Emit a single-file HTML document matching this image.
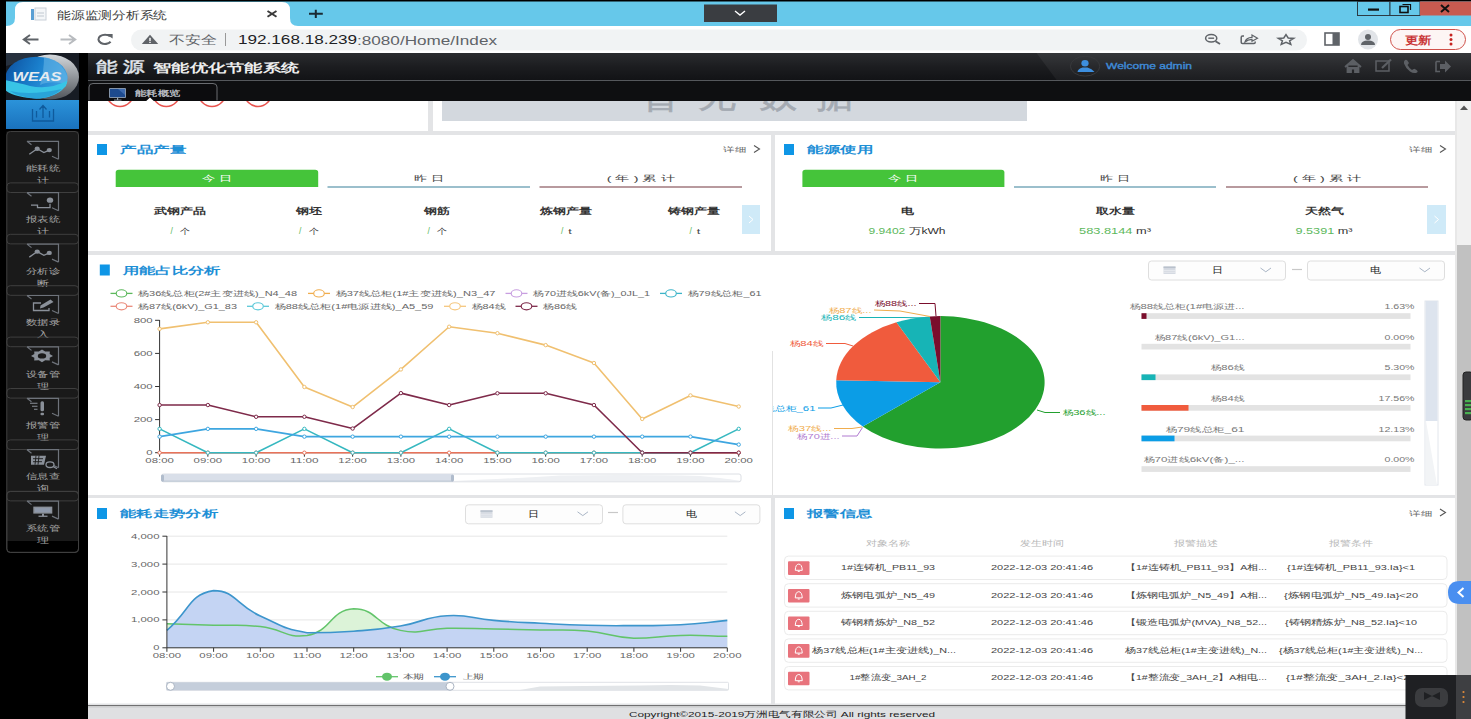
<!DOCTYPE html><html><head><meta charset="utf-8"><style>html,body{margin:0;padding:0;overflow:hidden;background:#000}svg{display:block;font-family:"Liberation Sans",sans-serif}</style></head><body><svg width="1471" height="719" viewBox="0 0 1471 719"><rect x="0" y="0" width="1471" height="719" fill="#000" />
<rect x="6" y="1.5" width="1465" height="25" fill="#66c8ea" />
<path d="M6,26 Q15,26 15,18 L15,10 Q15,2 23,2 L282,2 Q290,2 290,10 L290,18 Q290,26 298,26 Z" fill="#fff" />
<rect x="31" y="9" width="3" height="11" fill="#5a9fd4" />
<rect x="35" y="8" width="11" height="12" fill="#f4f6f8" stroke="#c9d0d8" stroke-width="1" />
<line x1="37" y1="13" x2="44" y2="13" stroke="#c0c8d0" stroke-width="1" />
<line x1="37" y1="16" x2="44" y2="16" stroke="#c0c8d0" stroke-width="1" />
<text x="57" y="14.5" font-size="11.0" fill="#3c3c3c" text-anchor="start" dominant-baseline="central" font-family="Liberation Sans" textLength="110" lengthAdjust="spacingAndGlyphs" >能源监测分析系统</text>
<path d="M267.5,11 L276.5,16.8 M276.5,11 L267.5,16.8" fill="none" stroke="#3a3a3a" stroke-width="1.9" />
<path d="M315.8,9.8 L315.8,18 M309,13.8 L322.8,13.8" fill="none" stroke="#1a2a33" stroke-width="2" />
<rect x="704" y="4.5" width="73" height="17.5" fill="#3a3d41" />
<path d="M735,11 L740,15 L745,11" fill="none" stroke="#fff" stroke-width="1.4" />
<rect x="1357.5" y="1.5" width="32.5" height="14" fill="#66c8ea" stroke="#2b3a44" stroke-width="1" />
<rect x="1390" y="1.5" width="30" height="14" fill="#66c8ea" stroke="#2b3a44" stroke-width="1" />
<rect x="1420" y="1.5" width="51" height="14" fill="#c75a50" />
<rect x="1368" y="8.5" width="11" height="2.2" fill="#111" />
<rect x="1400" y="6.5" width="8" height="6" fill="none" stroke="#111" stroke-width="1.6" />
<path d="M1402.5,4.5 L1410.5,4.5 L1410.5,10" fill="none" stroke="#111" stroke-width="1.2" />
<path d="M1441,5 L1449,12 M1449,5 L1441,12" fill="none" stroke="#111" stroke-width="2" />
<rect x="6" y="26" width="1465" height="27" fill="#fff" />
<path d="M23.8,39.5 L38.5,39.5 M30,35 L23.8,39.5 L30,44" fill="none" stroke="#5f6368" stroke-width="2" />
<path d="M60.5,39.5 L75.2,39.5 M69,35 L75.2,39.5 L69,44" fill="none" stroke="#b8bbbf" stroke-width="2" />
<path d="M110,36.3 A6.6,4.6 0 1 0 110.6,41.8" fill="none" stroke="#5f6368" stroke-width="2.1" />
<path d="M105.5,34 L112.6,34 L112.6,38.6 Z" fill="#5f6368" />
<rect x="131" y="29.5" width="1176" height="21" fill="#f1f3f4" rx="10.5" />
<path d="M150,34.8 L158.2,44 L141.8,44 Z" fill="#5f6368" />
<rect x="149.3" y="37.8" width="1.4" height="3.2" fill="#fff" />
<rect x="149.3" y="41.8" width="1.4" height="1.2" fill="#fff" />
<text x="169" y="39.5" font-size="11.5" fill="#5f6368" text-anchor="start" dominant-baseline="central" font-family="Liberation Sans" textLength="48" lengthAdjust="spacingAndGlyphs" >不安全</text>
<rect x="225" y="33" width="1" height="13" fill="#999" />
<text x="238" y="39.5" font-size="13.5" dominant-baseline="central" textLength="259" lengthAdjust="spacingAndGlyphs" fill="#202124">192.168.18.239<tspan fill="#5f6368">:8080/Home/Index</tspan></text>
<ellipse cx="1211.2" cy="38.2" rx="5.6" ry="3.7" fill="none" stroke="#5f6368" stroke-width="1.5"/>
<path d="M1215.5,41.2 L1220,44" fill="none" stroke="#5f6368" stroke-width="1.8" />
<path d="M1208.3,38.2 L1214.1,38.2" fill="none" stroke="#5f6368" stroke-width="1.4" />
<path d="M1244,36 L1242.5,36 Q1241.2,36 1241.2,37.5 L1241.2,42.3 Q1241.2,43.6 1242.5,43.6 L1254,43.6 Q1255.2,43.6 1255.2,42.3 L1255.2,41.5" fill="none" stroke="#5f6368" stroke-width="1.5" />
<path d="M1245,42 Q1246,37.5 1252,37.3 L1252,35 L1257.5,38.2 L1252,41.3 L1252,39.3 Q1248,39.2 1245,42 Z" fill="none" stroke="#5f6368" stroke-width="1.2" />
<path d="M1286,34.6 L1288.2,38 L1293.6,38.4 L1289.6,40.8 L1290.8,44.4 L1286,42.4 L1281.2,44.4 L1282.4,40.8 L1278.4,38.4 L1283.8,38 Z" fill="none" stroke="#5f6368" stroke-width="1.5" />
<rect x="1325" y="33" width="14" height="12" fill="none" stroke="#5f6368" stroke-width="1.6" />
<rect x="1332.5" y="33" width="6.5" height="12" fill="#5f6368" />
<circle cx="1368" cy="39.5" r="10" fill="#e1e4e8"/>
<circle cx="1368" cy="37" r="3" fill="#5f6368"/>
<path d="M1361,45 Q1361,40.5 1368,40.5 Q1375,40.5 1375,45 Z" fill="#5f6368" />
<rect x="1390.5" y="29.5" width="75" height="20" fill="#fdf5f4" rx="10" stroke="#d0514a" stroke-width="1" />
<text x="1418" y="39.5" font-size="10.5" fill="#c5221f" text-anchor="middle" dominant-baseline="central" font-family="Liberation Sans" textLength="27" lengthAdjust="spacingAndGlyphs" stroke="#c5221f" stroke-width="0.3">更新</text>
<circle cx="1451" cy="35.0" r="1.5" fill="#c5221f"/>
<circle cx="1451" cy="39.5" r="1.5" fill="#c5221f"/>
<circle cx="1451" cy="44.0" r="1.5" fill="#c5221f"/>
<defs><linearGradient id="hdr" x1="0" y1="0" x2="0" y2="1"><stop offset="0" stop-color="#2a2c2f"/><stop offset="0.5" stop-color="#1c1d20"/><stop offset="1" stop-color="#121316"/></linearGradient><linearGradient id="hdr2" x1="0" y1="0" x2="0" y2="1"><stop offset="0" stop-color="#36383b"/><stop offset="0.5" stop-color="#28292c"/><stop offset="1" stop-color="#1c1d20"/></linearGradient><linearGradient id="btnblue" x1="0" y1="0" x2="0" y2="1"><stop offset="0" stop-color="#2b93da"/><stop offset="1" stop-color="#1a72bd"/></linearGradient><linearGradient id="tabg" x1="0" y1="0" x2="0" y2="1"><stop offset="0" stop-color="#2c2d30"/><stop offset="1" stop-color="#111214"/></linearGradient><radialGradient id="logo1" cx="0.35" cy="0.35" r="0.8"><stop offset="0" stop-color="#58b4ea"/><stop offset="0.6" stop-color="#1f6fb8"/><stop offset="1" stop-color="#0f3f7a"/></radialGradient><linearGradient id="logoring" x1="0" y1="0" x2="1" y2="1"><stop offset="0" stop-color="#cfd4da"/><stop offset="1" stop-color="#4a4f55"/></linearGradient><linearGradient id="ttl" x1="0" y1="0" x2="0" y2="1"><stop offset="0" stop-color="#f4f6f8"/><stop offset="0.5" stop-color="#c8d0d8"/><stop offset="1" stop-color="#e8ecf0"/></linearGradient></defs>
<rect x="6" y="53" width="1465" height="27" fill="url(#hdr)" />
<path d="M1036.6,53 L1471,53 L1471,80 L1056.6,80 Z" fill="url(#hdr2)" />
<rect x="88" y="80" width="1383" height="1" fill="#55585c" />
<rect x="88" y="81" width="1383" height="20" fill="#0e0f11" />
<text x="96" y="67" font-size="14.5" fill="url(#ttl)" text-anchor="start" dominant-baseline="central" font-family="Liberation Sans" textLength="49" lengthAdjust="spacingAndGlyphs" font-weight="bold" >能 源</text>
<text x="153" y="67.5" font-size="11.5" fill="#eeeeee" text-anchor="start" dominant-baseline="central" font-family="Liberation Sans" textLength="146" lengthAdjust="spacingAndGlyphs" font-weight="bold" >智能优化节能系统</text>
<path d="M89,100.5 L89,87 Q89,83.5 93,83.5 L213,83.5 Q217,83.5 217,87 L217,100.5" fill="#0c0c0e" stroke="#6a6c70" stroke-width="1" />
<rect x="109" y="88" width="17" height="10" fill="#8494aa" rx="1" />
<rect x="110" y="89" width="15" height="8" fill="#1d4a8e" />
<path d="M118,89 L125,89 L125,95 Z" fill="#3d6aae" />
<rect x="117" y="98" width="1.2" height="2" fill="#9aa6b4" />
<rect x="114" y="99.6" width="7.5" height="0.9" fill="#9aa6b4" />
<text x="135" y="93" font-size="8.0" fill="#c4c8ce" text-anchor="start" dominant-baseline="central" font-family="Liberation Sans" textLength="45" lengthAdjust="spacingAndGlyphs" stroke="#c4c8ce" stroke-width="0.25">能耗概览</text>
<ellipse cx="1085.1" cy="66.2" rx="14.7" ry="9.9" fill="none" stroke="#38393c" stroke-width="1"/>
<ellipse cx="1085" cy="63.2" rx="3.6" ry="3.2" fill="#3d8fe0"/>
<path d="M1077.5,72 Q1078,68.5 1082.5,67.5 L1087.5,67.5 Q1092,68.5 1094.5,72 Z" fill="#3d8fe0" />
<text x="1106" y="66.2" font-size="8.8" fill="#3f8bd8" text-anchor="start" dominant-baseline="central" font-family="Liberation Sans" textLength="86" lengthAdjust="spacingAndGlyphs" stroke="#3f8bd8" stroke-width="0.35">Welcome admin</text>
<path d="M1345,67 L1353,60 L1361,67 M1347.5,65.5 L1347.5,72 L1351,72 L1351,68.5 L1355,68.5 L1355,72 L1358.5,72 L1358.5,65.5" fill="#5c5f64" stroke="#5c5f64" stroke-width="1.8" />
<rect x="1376" y="61" width="13" height="10" fill="none" stroke="#5c5f64" stroke-width="1.5" />
<path d="M1382,68 L1391,59.5" fill="none" stroke="#5c5f64" stroke-width="2.2" />
<path d="M1405,60 Q1407,59 1408,61.5 L1409,63 Q1408,64.5 1407.5,65 Q1409.5,68.5 1412,70 Q1413,69.2 1414.5,68.7 L1416.5,70 Q1418.5,71.5 1417,72.5 Q1414,74 1410,71.5 Q1405.5,68 1404,63.5 Q1403.5,61 1405,60 Z" fill="#5c5f64" />
<path d="M1436,61.5 L1440,61.5 M1436,61.5 L1436,71.5 L1440,71.5" fill="none" stroke="#5c5f64" stroke-width="1.6" />
<path d="M1440,64 L1445,64 L1445,60.5 L1451,66.5 L1445,72.5 L1445,69 L1440,69 Z" fill="#5c5f64" />
<rect x="0" y="53" width="88" height="666" fill="#000" />
<defs><linearGradient id="lg2" x1="0" y1="0" x2="0" y2="1"><stop offset="0" stop-color="#d4d8dc"/><stop offset="1" stop-color="#50555b"/></linearGradient><linearGradient id="lg3" x1="0" y1="0" x2="1" y2="0.3"><stop offset="0" stop-color="#0c4f9e"/><stop offset="0.55" stop-color="#1a7fcc"/><stop offset="1" stop-color="#3a9ee0"/></linearGradient><clipPath id="lgc"><rect x="6" y="53" width="73" height="47"/></clipPath></defs>
<g clip-path="url(#lgc)">
<rect x="6" y="53" width="73" height="47" fill="#171c24" />
<path d="M6,53 L46,53 Q30,60 6,66 Z" fill="#27313e" />
<ellipse cx="50" cy="77" rx="29" ry="22.5" fill="url(#lg2)"/>
<ellipse cx="36.5" cy="77.7" rx="31" ry="21" fill="url(#lg3)"/>
<path d="M44,57 Q62,60 67.5,77 L67,84 Q50,80 40,85 Q44,72 44,57 Z" fill="#6ab8e8" opacity="0.55"/>
<path d="M5,80 Q20,83 30,86 Q50,90 67.5,80.5 L66,86 Q58,96 40,98.6 Q14,98 5,90 Z" fill="#38c4e6" />
<path d="M10,91 Q30,96 62,89 Q52,98 36,98.6 Q18,97 10,91 Z" fill="#1f8fd0" opacity="0.6"/>
</g>
<text x="37" y="76.8" font-size="13.5" fill="#e6ebf0" text-anchor="middle" dominant-baseline="central" font-family="Liberation Sans" textLength="49" lengthAdjust="spacingAndGlyphs" font-weight="bold" font-style="italic">WEAS</text>
<rect x="6" y="100" width="73" height="29" fill="url(#btnblue)" />
<path d="M32.5,109 L32.5,121 L53.5,121 L53.5,109 M43,106 L43,118 M39.5,109.5 L43,105.5 L46.5,109.5 M36.5,111 L36.5,117.5 M49.5,111 L49.5,117.5" fill="none" stroke="#0f5a9c" stroke-width="1.3" />
<rect x="6.5" y="131.5" width="72" height="409.5" fill="#1a1a1a" />
<rect x="6.8" y="541" width="71.7" height="12" fill="#000" />
<rect x="6.8" y="131.5" width="71.7" height="61" fill="none" rx="3.5" stroke="#3f3f3f" stroke-width="1" />
<path d="M27,141.3 L58.5,141.3 L58.5,159.3 M52,156.3 L58.5,159.3 M27,141.3 L31.5,144.8" fill="none" stroke="#6e737b" stroke-width="1.2" />
<path d="M29.3,154.3 L37.2,148.8 L43.9,152.5 L49.3,150.10000000000002" fill="none" stroke="#8a9099" stroke-width="1.3" />
<ellipse cx="37.2" cy="148.8" rx="2.6" ry="2.2" fill="#8a9099"/>
<ellipse cx="49.3" cy="150.10000000000002" rx="2.6" ry="2.2" fill="#8a9099"/>
<text x="43" y="168.5" font-size="8.0" fill="#a8a8a8" text-anchor="middle" dominant-baseline="central" font-family="Liberation Sans" textLength="34" lengthAdjust="spacingAndGlyphs" >能耗统</text>
<text x="43" y="180.5" font-size="8.0" fill="#a8a8a8" text-anchor="middle" dominant-baseline="central" font-family="Liberation Sans" textLength="12" lengthAdjust="spacingAndGlyphs" >计</text>
<rect x="6.8" y="182.9" width="71.7" height="61" fill="none" rx="3.5" stroke="#3f3f3f" stroke-width="1" />
<path d="M27,192.70000000000002 L58.5,192.70000000000002 L58.5,210.70000000000002 M52,207.70000000000002 L58.5,210.70000000000002 M27,192.70000000000002 L31.5,196.20000000000002" fill="none" stroke="#6e737b" stroke-width="1.2" />
<path d="M31,205.20000000000002 L37.5,205.20000000000002 L37.5,207.70000000000002 L50,207.70000000000002 L50,203.70000000000002" fill="none" stroke="#8a9099" stroke-width="1.3" />
<ellipse cx="50" cy="200.20000000000002" rx="3.2" ry="2.6" fill="#8a9099"/>
<text x="43" y="219.9" font-size="8.0" fill="#a8a8a8" text-anchor="middle" dominant-baseline="central" font-family="Liberation Sans" textLength="34" lengthAdjust="spacingAndGlyphs" >报表统</text>
<text x="43" y="231.9" font-size="8.0" fill="#a8a8a8" text-anchor="middle" dominant-baseline="central" font-family="Liberation Sans" textLength="12" lengthAdjust="spacingAndGlyphs" >计</text>
<rect x="6.8" y="234.3" width="71.7" height="61" fill="none" rx="3.5" stroke="#3f3f3f" stroke-width="1" />
<path d="M27,244.10000000000002 L58.5,244.10000000000002 L58.5,262.1 M52,259.1 L58.5,262.1 M27,244.10000000000002 L31.5,247.60000000000002" fill="none" stroke="#6e737b" stroke-width="1.2" />
<path d="M29.3,257.1 L37.2,251.60000000000002 L43.9,255.3 L49.3,252.90000000000003" fill="none" stroke="#8a9099" stroke-width="1.3" />
<ellipse cx="37.2" cy="251.60000000000002" rx="2.6" ry="2.2" fill="#8a9099"/>
<ellipse cx="49.3" cy="252.90000000000003" rx="2.6" ry="2.2" fill="#8a9099"/>
<text x="43" y="271.3" font-size="8.0" fill="#a8a8a8" text-anchor="middle" dominant-baseline="central" font-family="Liberation Sans" textLength="34" lengthAdjust="spacingAndGlyphs" >分析诊</text>
<text x="43" y="283.3" font-size="8.0" fill="#a8a8a8" text-anchor="middle" dominant-baseline="central" font-family="Liberation Sans" textLength="12" lengthAdjust="spacingAndGlyphs" >断</text>
<rect x="6.8" y="285.7" width="71.7" height="61" fill="none" rx="3.5" stroke="#3f3f3f" stroke-width="1" />
<path d="M27,295.5 L58.5,295.5 L58.5,313.5 M52,310.5 L58.5,313.5 M27,295.5 L31.5,299.0" fill="none" stroke="#6e737b" stroke-width="1.2" />
<path d="M41,303.0 L33.5,303.0 L33.5,310.5 L49,310.5 L49,308.0" fill="none" stroke="#8a9099" stroke-width="1.3" />
<path d="M40,308.5 L40.5,305.5 L50.5,299.5 L53.5,302.0 L43.5,307.5 Z" fill="#8a9099" />
<text x="43" y="322.7" font-size="8.0" fill="#a8a8a8" text-anchor="middle" dominant-baseline="central" font-family="Liberation Sans" textLength="34" lengthAdjust="spacingAndGlyphs" >数据录</text>
<text x="43" y="334.7" font-size="8.0" fill="#a8a8a8" text-anchor="middle" dominant-baseline="central" font-family="Liberation Sans" textLength="12" lengthAdjust="spacingAndGlyphs" >入</text>
<rect x="6.8" y="337.1" width="71.7" height="61" fill="none" rx="3.5" stroke="#3f3f3f" stroke-width="1" />
<path d="M27,346.90000000000003 L58.5,346.90000000000003 L58.5,364.90000000000003 M52,361.90000000000003 L58.5,364.90000000000003 M27,346.90000000000003 L31.5,350.40000000000003" fill="none" stroke="#6e737b" stroke-width="1.2" />
<polygon points="53.00,355.90 49.67,357.74 49.78,360.41 45.18,360.35 42.00,362.28 38.82,360.35 34.22,360.41 34.33,357.74 31.00,355.90 34.33,354.06 34.22,351.39 38.82,351.45 42.00,349.52 45.18,351.45 49.78,351.39 49.67,354.06" fill="#8a9099"/>
<ellipse cx="42" cy="355.90000000000003" rx="4.2" ry="2.6" fill="#1a1a1a"/>
<text x="43" y="374.1" font-size="8.0" fill="#a8a8a8" text-anchor="middle" dominant-baseline="central" font-family="Liberation Sans" textLength="34" lengthAdjust="spacingAndGlyphs" >设备管</text>
<text x="43" y="386.1" font-size="8.0" fill="#a8a8a8" text-anchor="middle" dominant-baseline="central" font-family="Liberation Sans" textLength="12" lengthAdjust="spacingAndGlyphs" >理</text>
<rect x="6.8" y="388.5" width="71.7" height="61" fill="none" rx="3.5" stroke="#3f3f3f" stroke-width="1" />
<path d="M27,398.3 L58.5,398.3 L58.5,416.3 M52,413.3 L58.5,416.3 M27,398.3 L31.5,401.8" fill="none" stroke="#6e737b" stroke-width="1.2" />
<path d="M30,403.3 L37.5,403.3 M32,406.3 L37.5,406.3 M34,409.3 L37.5,409.3" fill="none" stroke="#8a9099" stroke-width="1.1" />
<rect x="40.5" y="401.3" width="3.5" height="10" fill="#8a9099" rx="1.5" />
<rect x="40.5" y="412.8" width="3.5" height="2.5" fill="#8a9099" rx="1" />
<text x="43" y="425.5" font-size="8.0" fill="#a8a8a8" text-anchor="middle" dominant-baseline="central" font-family="Liberation Sans" textLength="34" lengthAdjust="spacingAndGlyphs" >报警管</text>
<text x="43" y="437.5" font-size="8.0" fill="#a8a8a8" text-anchor="middle" dominant-baseline="central" font-family="Liberation Sans" textLength="12" lengthAdjust="spacingAndGlyphs" >理</text>
<rect x="6.8" y="439.9" width="71.7" height="61" fill="none" rx="3.5" stroke="#3f3f3f" stroke-width="1" />
<path d="M27,449.7 L58.5,449.7 L58.5,467.7 M52,464.7 L58.5,467.7 M27,449.7 L31.5,453.2" fill="none" stroke="#6e737b" stroke-width="1.2" />
<path d="M31,455.7 L46,455.7 L44,464.7 L31,464.7 Z" fill="#8a9099" />
<path d="M33,458.7 L43,458.7 M33,461.7 L42,461.7 M36,455.7 L35,464.7 M39,455.7 L38,464.7" fill="none" stroke="#1a1a1a" stroke-width="0.9" />
<ellipse cx="50" cy="464.7" rx="4" ry="2.8" fill="#1a1a1a" stroke="#8a9099" stroke-width="1.3"/>
<path d="M53.5,466.7 L57,468.7" fill="none" stroke="#8a9099" stroke-width="1.3" />
<text x="43" y="476.9" font-size="8.0" fill="#a8a8a8" text-anchor="middle" dominant-baseline="central" font-family="Liberation Sans" textLength="34" lengthAdjust="spacingAndGlyphs" >信息查</text>
<text x="43" y="488.9" font-size="8.0" fill="#a8a8a8" text-anchor="middle" dominant-baseline="central" font-family="Liberation Sans" textLength="12" lengthAdjust="spacingAndGlyphs" >询</text>
<rect x="6.8" y="491.3" width="71.7" height="61" fill="none" rx="3.5" stroke="#3f3f3f" stroke-width="1" />
<path d="M27,501.1 L58.5,501.1 L58.5,519.1 M52,516.1 L58.5,519.1 M27,501.1 L31.5,504.6" fill="none" stroke="#6e737b" stroke-width="1.2" />
<rect x="33.3" y="506.6" width="19" height="7" fill="#8a9099" />
<rect x="35" y="508.1" width="15.5" height="4" fill="#8f99ab" />
<rect x="42" y="513.6" width="2" height="2.5" fill="#8a9099" />
<rect x="38.5" y="515.6" width="9" height="1.3" fill="#8a9099" />
<text x="43" y="528.3" font-size="8.0" fill="#a8a8a8" text-anchor="middle" dominant-baseline="central" font-family="Liberation Sans" textLength="34" lengthAdjust="spacingAndGlyphs" >系统管</text>
<text x="43" y="540.3" font-size="8.0" fill="#a8a8a8" text-anchor="middle" dominant-baseline="central" font-family="Liberation Sans" textLength="12" lengthAdjust="spacingAndGlyphs" >理</text>
<rect x="6.8" y="491.5" width="71.7" height="61" fill="none" rx="3.5" stroke="#3f3f3f" stroke-width="1" />
<rect x="88" y="101" width="1369" height="604" fill="#e3e4e6" />
<rect x="88" y="101" width="340" height="30" fill="#fff" />
<rect x="433" y="101" width="1022" height="30" fill="#fff" />
<clipPath id="cc"><rect x="88" y="101" width="1369" height="604"/></clipPath>
<g clip-path="url(#cc)">
<circle cx="120" cy="93" r="13.5" fill="none" stroke="#e8534e" stroke-width="1.6"/>
<circle cx="166.3" cy="93" r="13.5" fill="none" stroke="#e8534e" stroke-width="1.6"/>
<circle cx="212" cy="93" r="13.5" fill="none" stroke="#e8534e" stroke-width="1.6"/>
<circle cx="258" cy="93" r="13.5" fill="none" stroke="#e8534e" stroke-width="1.6"/>
<rect x="442" y="101" width="585" height="20" fill="#d3d8de" />
<text x="661" y="94.5" font-size="33.88" fill="#a4aab2" text-anchor="middle" dominant-baseline="central" font-family="Liberation Sans" textLength="38" lengthAdjust="spacingAndGlyphs" stroke="#a4aab2" stroke-width="0.6">暂</text>
<text x="716.5" y="94.5" font-size="33.88" fill="#a4aab2" text-anchor="middle" dominant-baseline="central" font-family="Liberation Sans" textLength="38" lengthAdjust="spacingAndGlyphs" stroke="#a4aab2" stroke-width="0.6">无</text>
<text x="778" y="94.5" font-size="33.88" fill="#a4aab2" text-anchor="middle" dominant-baseline="central" font-family="Liberation Sans" textLength="38" lengthAdjust="spacingAndGlyphs" stroke="#a4aab2" stroke-width="0.6">数</text>
<text x="834.5" y="94.5" font-size="33.88" fill="#a4aab2" text-anchor="middle" dominant-baseline="central" font-family="Liberation Sans" textLength="38" lengthAdjust="spacingAndGlyphs" stroke="#a4aab2" stroke-width="0.6">据</text>
</g>
<path d="M146,101.2 L150,97.5 L154,101.2 Z" fill="#fff" />
<rect x="88" y="135" width="683" height="116" fill="#fff" />
<rect x="97" y="144.0" width="10" height="11" fill="#0e96e6" />
<text x="120" y="149.5" font-size="10.01" fill="#1e8fd6" text-anchor="start" dominant-baseline="central" font-family="Liberation Sans" textLength="66" lengthAdjust="spacingAndGlyphs" font-weight="bold" >产品产量</text>
<text x="746" y="149.5" font-size="6.54" fill="#666" text-anchor="end" dominant-baseline="central" font-family="Liberation Sans" textLength="23" lengthAdjust="spacingAndGlyphs" >详细</text>
<path d="M754,145.5 L759.5,149 L754,152.5" fill="none" stroke="#555" stroke-width="1.1" />
<path d="M115.7,187 L115.7,172.5 Q115.7,169.7 118.7,169.7 L315.2,169.7 Q318.2,169.7 318.2,172.5 L318.2,187 Z" fill="#45c43a" />
<text x="216.95" y="178.5" font-size="8.09" fill="#fff" text-anchor="middle" dominant-baseline="central" font-family="Liberation Sans" textLength="30" lengthAdjust="spacingAndGlyphs" >今 日</text>
<rect x="327.5" y="186" width="202.5" height="2" fill="#9bbfcc" />
<text x="428.75" y="178.5" font-size="8.09" fill="#444" text-anchor="middle" dominant-baseline="central" font-family="Liberation Sans" textLength="30" lengthAdjust="spacingAndGlyphs" >昨 日</text>
<rect x="539.5" y="186" width="202.5" height="2" fill="#b89a9e" />
<text x="640.75" y="178.5" font-size="8.09" fill="#444" text-anchor="middle" dominant-baseline="central" font-family="Liberation Sans" textLength="68" lengthAdjust="spacingAndGlyphs" >( 年 ) 累 计</text>
<text x="180.0" y="210.5" font-size="8.86" fill="#333" text-anchor="middle" dominant-baseline="central" font-family="Liberation Sans" textLength="52" lengthAdjust="spacingAndGlyphs" font-weight="bold" >武钢产品</text>
<text x="170.5" y="231" font-size="8.5" dominant-baseline="central" fill="#444"><tspan fill="#5cb85c">/</tspan></text>
<text x="185.0" y="231" font-size="8.47" fill="#444" text-anchor="middle" dominant-baseline="central" font-family="Liberation Sans" textLength="10" lengthAdjust="spacingAndGlyphs" >个</text>
<text x="308.5" y="210.5" font-size="8.86" fill="#333" text-anchor="middle" dominant-baseline="central" font-family="Liberation Sans" textLength="26" lengthAdjust="spacingAndGlyphs" font-weight="bold" >钢坯</text>
<text x="299.0" y="231" font-size="8.5" dominant-baseline="central" fill="#444"><tspan fill="#5cb85c">/</tspan></text>
<text x="313.5" y="231" font-size="8.47" fill="#444" text-anchor="middle" dominant-baseline="central" font-family="Liberation Sans" textLength="10" lengthAdjust="spacingAndGlyphs" >个</text>
<text x="437.0" y="210.5" font-size="8.86" fill="#333" text-anchor="middle" dominant-baseline="central" font-family="Liberation Sans" textLength="26" lengthAdjust="spacingAndGlyphs" font-weight="bold" >钢筋</text>
<text x="427.5" y="231" font-size="8.5" dominant-baseline="central" fill="#444"><tspan fill="#5cb85c">/</tspan></text>
<text x="442.0" y="231" font-size="8.47" fill="#444" text-anchor="middle" dominant-baseline="central" font-family="Liberation Sans" textLength="10" lengthAdjust="spacingAndGlyphs" >个</text>
<text x="565.5" y="210.5" font-size="8.86" fill="#333" text-anchor="middle" dominant-baseline="central" font-family="Liberation Sans" textLength="52" lengthAdjust="spacingAndGlyphs" font-weight="bold" >炼钢产量</text>
<text x="561.0" y="231" font-size="8.5" dominant-baseline="central" fill="#444"><tspan fill="#5cb85c">/</tspan></text>
<text x="570.0" y="231.5" font-size="6.93" fill="#444" text-anchor="middle" dominant-baseline="central" font-family="Liberation Sans" textLength="3.5" lengthAdjust="spacingAndGlyphs" >t</text>
<text x="694.0" y="210.5" font-size="8.86" fill="#333" text-anchor="middle" dominant-baseline="central" font-family="Liberation Sans" textLength="52" lengthAdjust="spacingAndGlyphs" font-weight="bold" >铸钢产量</text>
<text x="689.5" y="231" font-size="8.5" dominant-baseline="central" fill="#444"><tspan fill="#5cb85c">/</tspan></text>
<text x="698.5" y="231.5" font-size="6.93" fill="#444" text-anchor="middle" dominant-baseline="central" font-family="Liberation Sans" textLength="3.5" lengthAdjust="spacingAndGlyphs" >t</text>
<rect x="742" y="205" width="18" height="29" fill="#cfeaf8" />
<path d="M749,216 L753,219.5 L749,223" fill="none" stroke="#fff" stroke-width="1" />
<rect x="775" y="135" width="680" height="116" fill="#fff" />
<rect x="784" y="144.0" width="10" height="11" fill="#0e96e6" />
<text x="807" y="149.5" font-size="10.01" fill="#1e8fd6" text-anchor="start" dominant-baseline="central" font-family="Liberation Sans" textLength="66" lengthAdjust="spacingAndGlyphs" font-weight="bold" >能源使用</text>
<text x="1432" y="149.5" font-size="6.54" fill="#666" text-anchor="end" dominant-baseline="central" font-family="Liberation Sans" textLength="23" lengthAdjust="spacingAndGlyphs" >详细</text>
<path d="M1440,145.5 L1445.5,149 L1440,152.5" fill="none" stroke="#555" stroke-width="1.1" />
<path d="M802.4,187 L802.4,172.5 Q802.4,169.7 805.4,169.7 L1001.4,169.7 Q1004.4,169.7 1004.4,172.5 L1004.4,187 Z" fill="#45c43a" />
<text x="903.4" y="178.5" font-size="8.09" fill="#fff" text-anchor="middle" dominant-baseline="central" font-family="Liberation Sans" textLength="30" lengthAdjust="spacingAndGlyphs" >今 日</text>
<rect x="1014" y="186" width="202" height="2" fill="#9bbfcc" />
<text x="1115.0" y="178.5" font-size="8.09" fill="#444" text-anchor="middle" dominant-baseline="central" font-family="Liberation Sans" textLength="30" lengthAdjust="spacingAndGlyphs" >昨 日</text>
<rect x="1226" y="186" width="202" height="2" fill="#b89a9e" />
<text x="1327.0" y="178.5" font-size="8.09" fill="#444" text-anchor="middle" dominant-baseline="central" font-family="Liberation Sans" textLength="68" lengthAdjust="spacingAndGlyphs" >( 年 ) 累 计</text>
<text x="907" y="210.5" font-size="8.86" fill="#333" text-anchor="middle" dominant-baseline="central" font-family="Liberation Sans" textLength="13" lengthAdjust="spacingAndGlyphs" font-weight="bold" >电</text>
<text x="907" y="231" font-size="8.5" text-anchor="middle" dominant-baseline="central" fill="#333" textLength="77" lengthAdjust="spacingAndGlyphs"><tspan fill="#5cb85c">9.9402</tspan> 万kWh</text>
<text x="1115" y="210.5" font-size="8.86" fill="#333" text-anchor="middle" dominant-baseline="central" font-family="Liberation Sans" textLength="39" lengthAdjust="spacingAndGlyphs" font-weight="bold" >取水量</text>
<text x="1115" y="231" font-size="8.5" text-anchor="middle" dominant-baseline="central" fill="#333" textLength="72" lengthAdjust="spacingAndGlyphs"><tspan fill="#5cb85c">583.8144</tspan> m³</text>
<text x="1324" y="210.5" font-size="8.86" fill="#333" text-anchor="middle" dominant-baseline="central" font-family="Liberation Sans" textLength="39" lengthAdjust="spacingAndGlyphs" font-weight="bold" >天然气</text>
<text x="1324" y="231" font-size="8.5" text-anchor="middle" dominant-baseline="central" fill="#333" textLength="57" lengthAdjust="spacingAndGlyphs"><tspan fill="#5cb85c">9.5391</tspan> m³</text>
<rect x="1427" y="205" width="19" height="29" fill="#cfeaf8" />
<path d="M1434.5,216 L1438.5,219.5 L1434.5,223" fill="none" stroke="#fff" stroke-width="1" />
<rect x="88" y="255" width="1367" height="240" fill="#fff" />
<rect x="99.8" y="264.5" width="10" height="11" fill="#0e96e6" />
<text x="122.8" y="270" font-size="10.01" fill="#1e8fd6" text-anchor="start" dominant-baseline="central" font-family="Liberation Sans" textLength="98" lengthAdjust="spacingAndGlyphs" font-weight="bold" >用能占比分析</text>
<line x1="772.5" y1="351" x2="772.5" y2="495" stroke="#e2e2e2" stroke-width="1" />
<rect x="88" y="498" width="683" height="205.5" fill="#fff" />
<rect x="97" y="508.0" width="10" height="11" fill="#0e96e6" />
<text x="120" y="513.5" font-size="10.01" fill="#1e8fd6" text-anchor="start" dominant-baseline="central" font-family="Liberation Sans" textLength="98" lengthAdjust="spacingAndGlyphs" font-weight="bold" >能耗走势分析</text>
<rect x="775" y="498" width="680" height="205.5" fill="#fff" />
<rect x="784" y="508.0" width="10" height="11" fill="#0e96e6" />
<text x="807" y="513.5" font-size="10.01" fill="#1e8fd6" text-anchor="start" dominant-baseline="central" font-family="Liberation Sans" textLength="65" lengthAdjust="spacingAndGlyphs" font-weight="bold" >报警信息</text>
<text x="1432" y="513.0" font-size="6.54" fill="#666" text-anchor="end" dominant-baseline="central" font-family="Liberation Sans" textLength="23" lengthAdjust="spacingAndGlyphs" >详细</text>
<path d="M1440,509.0 L1445.5,512.5 L1440,516.0" fill="none" stroke="#555" stroke-width="1.1" />
<rect x="88" y="705.5" width="1369" height="13.5" fill="#dfe0e2" />
<rect x="88" y="706" width="1369" height="1.6" fill="#cdcecf" />
<text x="782" y="714" font-size="8.09" fill="#222" text-anchor="middle" dominant-baseline="central" font-family="Liberation Sans" textLength="306" lengthAdjust="spacingAndGlyphs" >Copyright©2015-2019万洲电气有限公司 All rights reserved</text>
<rect x="1455" y="101" width="2" height="604" fill="#e8e8e8" />
<rect x="1457" y="101" width="14" height="618" fill="#f1f1f1" />
<path d="M1460,110 L1464,105.5 L1468,110 Z" fill="#555" />
<rect x="1457" y="245" width="14" height="474" fill="#c1c1c1" />
<line x1="159.6" y1="320" x2="159.6" y2="452.7" stroke="#333" stroke-width="1" />
<line x1="155.1" y1="452.7" x2="159.6" y2="452.7" stroke="#333" stroke-width="1" />
<text x="152.7" y="452.7" font-size="7.7" fill="#666" text-anchor="end" dominant-baseline="central" font-family="Liberation Sans" textLength="6.35" lengthAdjust="spacingAndGlyphs" >0</text>
<line x1="155.1" y1="419.59999999999997" x2="159.6" y2="419.59999999999997" stroke="#333" stroke-width="1" />
<text x="152.7" y="419.59999999999997" font-size="7.7" fill="#666" text-anchor="end" dominant-baseline="central" font-family="Liberation Sans" textLength="19.049999999999997" lengthAdjust="spacingAndGlyphs" >200</text>
<line x1="155.1" y1="386.5" x2="159.6" y2="386.5" stroke="#333" stroke-width="1" />
<text x="152.7" y="386.5" font-size="7.7" fill="#666" text-anchor="end" dominant-baseline="central" font-family="Liberation Sans" textLength="19.049999999999997" lengthAdjust="spacingAndGlyphs" >400</text>
<line x1="155.1" y1="353.4" x2="159.6" y2="353.4" stroke="#333" stroke-width="1" />
<text x="152.7" y="353.4" font-size="7.7" fill="#666" text-anchor="end" dominant-baseline="central" font-family="Liberation Sans" textLength="19.049999999999997" lengthAdjust="spacingAndGlyphs" >600</text>
<line x1="155.1" y1="320.29999999999995" x2="159.6" y2="320.29999999999995" stroke="#333" stroke-width="1" />
<text x="152.7" y="320.29999999999995" font-size="7.7" fill="#666" text-anchor="end" dominant-baseline="central" font-family="Liberation Sans" textLength="19.049999999999997" lengthAdjust="spacingAndGlyphs" >800</text>
<line x1="159.6" y1="452.7" x2="738.72" y2="452.7" stroke="#333" stroke-width="1" />
<line x1="159.6" y1="452.7" x2="159.6" y2="456.7" stroke="#333" stroke-width="1" />
<text x="159.6" y="460.5" font-size="7.7" fill="#666" text-anchor="middle" dominant-baseline="central" font-family="Liberation Sans" textLength="28.5" lengthAdjust="spacingAndGlyphs" >08:00</text>
<line x1="207.85999999999999" y1="452.7" x2="207.85999999999999" y2="456.7" stroke="#333" stroke-width="1" />
<text x="207.85999999999999" y="460.5" font-size="7.7" fill="#666" text-anchor="middle" dominant-baseline="central" font-family="Liberation Sans" textLength="28.5" lengthAdjust="spacingAndGlyphs" >09:00</text>
<line x1="256.12" y1="452.7" x2="256.12" y2="456.7" stroke="#333" stroke-width="1" />
<text x="256.12" y="460.5" font-size="7.7" fill="#666" text-anchor="middle" dominant-baseline="central" font-family="Liberation Sans" textLength="28.5" lengthAdjust="spacingAndGlyphs" >10:00</text>
<line x1="304.38" y1="452.7" x2="304.38" y2="456.7" stroke="#333" stroke-width="1" />
<text x="304.38" y="460.5" font-size="7.7" fill="#666" text-anchor="middle" dominant-baseline="central" font-family="Liberation Sans" textLength="28.5" lengthAdjust="spacingAndGlyphs" >11:00</text>
<line x1="352.64" y1="452.7" x2="352.64" y2="456.7" stroke="#333" stroke-width="1" />
<text x="352.64" y="460.5" font-size="7.7" fill="#666" text-anchor="middle" dominant-baseline="central" font-family="Liberation Sans" textLength="28.5" lengthAdjust="spacingAndGlyphs" >12:00</text>
<line x1="400.9" y1="452.7" x2="400.9" y2="456.7" stroke="#333" stroke-width="1" />
<text x="400.9" y="460.5" font-size="7.7" fill="#666" text-anchor="middle" dominant-baseline="central" font-family="Liberation Sans" textLength="28.5" lengthAdjust="spacingAndGlyphs" >13:00</text>
<line x1="449.15999999999997" y1="452.7" x2="449.15999999999997" y2="456.7" stroke="#333" stroke-width="1" />
<text x="449.15999999999997" y="460.5" font-size="7.7" fill="#666" text-anchor="middle" dominant-baseline="central" font-family="Liberation Sans" textLength="28.5" lengthAdjust="spacingAndGlyphs" >14:00</text>
<line x1="497.41999999999996" y1="452.7" x2="497.41999999999996" y2="456.7" stroke="#333" stroke-width="1" />
<text x="497.41999999999996" y="460.5" font-size="7.7" fill="#666" text-anchor="middle" dominant-baseline="central" font-family="Liberation Sans" textLength="28.5" lengthAdjust="spacingAndGlyphs" >15:00</text>
<line x1="545.68" y1="452.7" x2="545.68" y2="456.7" stroke="#333" stroke-width="1" />
<text x="545.68" y="460.5" font-size="7.7" fill="#666" text-anchor="middle" dominant-baseline="central" font-family="Liberation Sans" textLength="28.5" lengthAdjust="spacingAndGlyphs" >16:00</text>
<line x1="593.9399999999999" y1="452.7" x2="593.9399999999999" y2="456.7" stroke="#333" stroke-width="1" />
<text x="593.9399999999999" y="460.5" font-size="7.7" fill="#666" text-anchor="middle" dominant-baseline="central" font-family="Liberation Sans" textLength="28.5" lengthAdjust="spacingAndGlyphs" >17:00</text>
<line x1="642.1999999999999" y1="452.7" x2="642.1999999999999" y2="456.7" stroke="#333" stroke-width="1" />
<text x="642.1999999999999" y="460.5" font-size="7.7" fill="#666" text-anchor="middle" dominant-baseline="central" font-family="Liberation Sans" textLength="28.5" lengthAdjust="spacingAndGlyphs" >18:00</text>
<line x1="690.46" y1="452.7" x2="690.46" y2="456.7" stroke="#333" stroke-width="1" />
<text x="690.46" y="460.5" font-size="7.7" fill="#666" text-anchor="middle" dominant-baseline="central" font-family="Liberation Sans" textLength="28.5" lengthAdjust="spacingAndGlyphs" >19:00</text>
<line x1="738.72" y1="452.7" x2="738.72" y2="456.7" stroke="#333" stroke-width="1" />
<text x="738.72" y="460.5" font-size="7.7" fill="#666" text-anchor="middle" dominant-baseline="central" font-family="Liberation Sans" textLength="28.5" lengthAdjust="spacingAndGlyphs" >20:00</text>
<polyline points="159.60,452.70 207.86,452.70 256.12,452.70 304.38,452.70 352.64,452.70 400.90,452.70 449.16,452.70 497.42,452.70 545.68,452.70 593.94,452.70 642.20,452.70 690.46,452.70 738.72,452.70" fill="none" stroke="#e8735a" stroke-width="1.6" stroke-linejoin="round"/>
<polyline points="159.60,428.87 207.86,452.70 256.12,452.70 304.38,428.87 352.64,452.70 400.90,452.70 449.16,428.87 497.42,452.70 545.68,452.70 593.94,452.70 642.20,452.70 690.46,452.70 738.72,428.87" fill="none" stroke="#36b8c0" stroke-width="1.6" stroke-linejoin="round"/>
<polyline points="159.60,436.65 207.86,428.87 256.12,428.87 304.38,436.65 352.64,436.65 400.90,436.65 449.16,436.65 497.42,436.65 545.68,436.65 593.94,436.65 642.20,436.65 690.46,436.65 738.72,444.59" fill="none" stroke="#3ea6e0" stroke-width="1.6" stroke-linejoin="round"/>
<polyline points="159.60,328.91 207.86,322.29 256.12,322.29 304.38,387.00 352.64,407.02 400.90,369.45 449.16,326.75 497.42,333.21 545.68,345.12 593.94,363.00 642.20,418.94 690.46,395.44 738.72,406.53" fill="none" stroke="#f0c070" stroke-width="1.6" stroke-linejoin="round"/>
<polyline points="159.60,405.04 207.86,405.04 256.12,416.79 304.38,416.79 352.64,428.54 400.90,393.12 449.16,405.04 497.42,393.29 545.68,393.29 593.94,405.04 642.20,452.70 690.46,452.70 738.72,452.70" fill="none" stroke="#7e2a4a" stroke-width="1.6" stroke-linejoin="round"/>
<circle cx="159.60" cy="452.70" r="1.7" fill="#fff" stroke="#e8735a" stroke-width="1"/>
<circle cx="207.86" cy="452.70" r="1.7" fill="#fff" stroke="#e8735a" stroke-width="1"/>
<circle cx="256.12" cy="452.70" r="1.7" fill="#fff" stroke="#e8735a" stroke-width="1"/>
<circle cx="304.38" cy="452.70" r="1.7" fill="#fff" stroke="#e8735a" stroke-width="1"/>
<circle cx="352.64" cy="452.70" r="1.7" fill="#fff" stroke="#e8735a" stroke-width="1"/>
<circle cx="400.90" cy="452.70" r="1.7" fill="#fff" stroke="#e8735a" stroke-width="1"/>
<circle cx="449.16" cy="452.70" r="1.7" fill="#fff" stroke="#e8735a" stroke-width="1"/>
<circle cx="497.42" cy="452.70" r="1.7" fill="#fff" stroke="#e8735a" stroke-width="1"/>
<circle cx="545.68" cy="452.70" r="1.7" fill="#fff" stroke="#e8735a" stroke-width="1"/>
<circle cx="593.94" cy="452.70" r="1.7" fill="#fff" stroke="#e8735a" stroke-width="1"/>
<circle cx="642.20" cy="452.70" r="1.7" fill="#fff" stroke="#e8735a" stroke-width="1"/>
<circle cx="690.46" cy="452.70" r="1.7" fill="#fff" stroke="#e8735a" stroke-width="1"/>
<circle cx="738.72" cy="452.70" r="1.7" fill="#fff" stroke="#e8735a" stroke-width="1"/>
<circle cx="159.60" cy="428.87" r="1.7" fill="#fff" stroke="#36b8c0" stroke-width="1"/>
<circle cx="207.86" cy="452.70" r="1.7" fill="#fff" stroke="#36b8c0" stroke-width="1"/>
<circle cx="256.12" cy="452.70" r="1.7" fill="#fff" stroke="#36b8c0" stroke-width="1"/>
<circle cx="304.38" cy="428.87" r="1.7" fill="#fff" stroke="#36b8c0" stroke-width="1"/>
<circle cx="352.64" cy="452.70" r="1.7" fill="#fff" stroke="#36b8c0" stroke-width="1"/>
<circle cx="400.90" cy="452.70" r="1.7" fill="#fff" stroke="#36b8c0" stroke-width="1"/>
<circle cx="449.16" cy="428.87" r="1.7" fill="#fff" stroke="#36b8c0" stroke-width="1"/>
<circle cx="497.42" cy="452.70" r="1.7" fill="#fff" stroke="#36b8c0" stroke-width="1"/>
<circle cx="545.68" cy="452.70" r="1.7" fill="#fff" stroke="#36b8c0" stroke-width="1"/>
<circle cx="593.94" cy="452.70" r="1.7" fill="#fff" stroke="#36b8c0" stroke-width="1"/>
<circle cx="642.20" cy="452.70" r="1.7" fill="#fff" stroke="#36b8c0" stroke-width="1"/>
<circle cx="690.46" cy="452.70" r="1.7" fill="#fff" stroke="#36b8c0" stroke-width="1"/>
<circle cx="738.72" cy="428.87" r="1.7" fill="#fff" stroke="#36b8c0" stroke-width="1"/>
<circle cx="159.60" cy="436.65" r="1.7" fill="#fff" stroke="#3ea6e0" stroke-width="1"/>
<circle cx="207.86" cy="428.87" r="1.7" fill="#fff" stroke="#3ea6e0" stroke-width="1"/>
<circle cx="256.12" cy="428.87" r="1.7" fill="#fff" stroke="#3ea6e0" stroke-width="1"/>
<circle cx="304.38" cy="436.65" r="1.7" fill="#fff" stroke="#3ea6e0" stroke-width="1"/>
<circle cx="352.64" cy="436.65" r="1.7" fill="#fff" stroke="#3ea6e0" stroke-width="1"/>
<circle cx="400.90" cy="436.65" r="1.7" fill="#fff" stroke="#3ea6e0" stroke-width="1"/>
<circle cx="449.16" cy="436.65" r="1.7" fill="#fff" stroke="#3ea6e0" stroke-width="1"/>
<circle cx="497.42" cy="436.65" r="1.7" fill="#fff" stroke="#3ea6e0" stroke-width="1"/>
<circle cx="545.68" cy="436.65" r="1.7" fill="#fff" stroke="#3ea6e0" stroke-width="1"/>
<circle cx="593.94" cy="436.65" r="1.7" fill="#fff" stroke="#3ea6e0" stroke-width="1"/>
<circle cx="642.20" cy="436.65" r="1.7" fill="#fff" stroke="#3ea6e0" stroke-width="1"/>
<circle cx="690.46" cy="436.65" r="1.7" fill="#fff" stroke="#3ea6e0" stroke-width="1"/>
<circle cx="738.72" cy="444.59" r="1.7" fill="#fff" stroke="#3ea6e0" stroke-width="1"/>
<circle cx="159.60" cy="328.91" r="1.7" fill="#fff" stroke="#f0c070" stroke-width="1"/>
<circle cx="207.86" cy="322.29" r="1.7" fill="#fff" stroke="#f0c070" stroke-width="1"/>
<circle cx="256.12" cy="322.29" r="1.7" fill="#fff" stroke="#f0c070" stroke-width="1"/>
<circle cx="304.38" cy="387.00" r="1.7" fill="#fff" stroke="#f0c070" stroke-width="1"/>
<circle cx="352.64" cy="407.02" r="1.7" fill="#fff" stroke="#f0c070" stroke-width="1"/>
<circle cx="400.90" cy="369.45" r="1.7" fill="#fff" stroke="#f0c070" stroke-width="1"/>
<circle cx="449.16" cy="326.75" r="1.7" fill="#fff" stroke="#f0c070" stroke-width="1"/>
<circle cx="497.42" cy="333.21" r="1.7" fill="#fff" stroke="#f0c070" stroke-width="1"/>
<circle cx="545.68" cy="345.12" r="1.7" fill="#fff" stroke="#f0c070" stroke-width="1"/>
<circle cx="593.94" cy="363.00" r="1.7" fill="#fff" stroke="#f0c070" stroke-width="1"/>
<circle cx="642.20" cy="418.94" r="1.7" fill="#fff" stroke="#f0c070" stroke-width="1"/>
<circle cx="690.46" cy="395.44" r="1.7" fill="#fff" stroke="#f0c070" stroke-width="1"/>
<circle cx="738.72" cy="406.53" r="1.7" fill="#fff" stroke="#f0c070" stroke-width="1"/>
<circle cx="159.60" cy="405.04" r="1.7" fill="#fff" stroke="#7e2a4a" stroke-width="1"/>
<circle cx="207.86" cy="405.04" r="1.7" fill="#fff" stroke="#7e2a4a" stroke-width="1"/>
<circle cx="256.12" cy="416.79" r="1.7" fill="#fff" stroke="#7e2a4a" stroke-width="1"/>
<circle cx="304.38" cy="416.79" r="1.7" fill="#fff" stroke="#7e2a4a" stroke-width="1"/>
<circle cx="352.64" cy="428.54" r="1.7" fill="#fff" stroke="#7e2a4a" stroke-width="1"/>
<circle cx="400.90" cy="393.12" r="1.7" fill="#fff" stroke="#7e2a4a" stroke-width="1"/>
<circle cx="449.16" cy="405.04" r="1.7" fill="#fff" stroke="#7e2a4a" stroke-width="1"/>
<circle cx="497.42" cy="393.29" r="1.7" fill="#fff" stroke="#7e2a4a" stroke-width="1"/>
<circle cx="545.68" cy="393.29" r="1.7" fill="#fff" stroke="#7e2a4a" stroke-width="1"/>
<circle cx="593.94" cy="405.04" r="1.7" fill="#fff" stroke="#7e2a4a" stroke-width="1"/>
<circle cx="642.20" cy="452.70" r="1.7" fill="#fff" stroke="#7e2a4a" stroke-width="1"/>
<circle cx="690.46" cy="452.70" r="1.7" fill="#fff" stroke="#7e2a4a" stroke-width="1"/>
<circle cx="738.72" cy="452.70" r="1.7" fill="#fff" stroke="#7e2a4a" stroke-width="1"/>
<line x1="110.5" y1="293.4" x2="132.5" y2="293.4" stroke="#5cb85c" stroke-width="1.3" />
<ellipse cx="121.5" cy="293.4" rx="5.3" ry="3.6" fill="#fff" stroke="#5cb85c" stroke-width="1.1"/>
<text x="138.0" y="293.4" font-size="6.93" fill="#666" text-anchor="start" dominant-baseline="central" font-family="Liberation Sans" textLength="159" lengthAdjust="spacingAndGlyphs" >杨36线总柜(2#主变进线)_N4_48</text>
<line x1="308" y1="293.4" x2="330" y2="293.4" stroke="#f0ad4e" stroke-width="1.3" />
<ellipse cx="319" cy="293.4" rx="5.3" ry="3.6" fill="#fff" stroke="#f0ad4e" stroke-width="1.1"/>
<text x="335.5" y="293.4" font-size="6.93" fill="#666" text-anchor="start" dominant-baseline="central" font-family="Liberation Sans" textLength="160" lengthAdjust="spacingAndGlyphs" >杨37线总柜(1#主变进线)_N3_47</text>
<line x1="505.5" y1="293.4" x2="527.5" y2="293.4" stroke="#c89ee0" stroke-width="1.3" />
<ellipse cx="516.5" cy="293.4" rx="5.3" ry="3.6" fill="#fff" stroke="#c89ee0" stroke-width="1.1"/>
<text x="533.0" y="293.4" font-size="6.93" fill="#666" text-anchor="start" dominant-baseline="central" font-family="Liberation Sans" textLength="117" lengthAdjust="spacingAndGlyphs" >杨70进线6kV(备)_0JL_1</text>
<line x1="660" y1="293.4" x2="682" y2="293.4" stroke="#3cb4c8" stroke-width="1.3" />
<ellipse cx="671" cy="293.4" rx="5.3" ry="3.6" fill="#fff" stroke="#3cb4c8" stroke-width="1.1"/>
<text x="687.5" y="293.4" font-size="6.93" fill="#666" text-anchor="start" dominant-baseline="central" font-family="Liberation Sans" textLength="74" lengthAdjust="spacingAndGlyphs" >杨79线总柜_61</text>
<line x1="110.5" y1="306.3" x2="132.5" y2="306.3" stroke="#ea8a7a" stroke-width="1.3" />
<ellipse cx="121.5" cy="306.3" rx="5.3" ry="3.6" fill="#fff" stroke="#ea8a7a" stroke-width="1.1"/>
<text x="138.0" y="306.3" font-size="6.93" fill="#666" text-anchor="start" dominant-baseline="central" font-family="Liberation Sans" textLength="99" lengthAdjust="spacingAndGlyphs" >杨87线(6kV)_G1_83</text>
<line x1="247" y1="306.3" x2="269" y2="306.3" stroke="#5bc8d8" stroke-width="1.3" />
<ellipse cx="258" cy="306.3" rx="5.3" ry="3.6" fill="#fff" stroke="#5bc8d8" stroke-width="1.1"/>
<text x="274.5" y="306.3" font-size="6.93" fill="#666" text-anchor="start" dominant-baseline="central" font-family="Liberation Sans" textLength="159" lengthAdjust="spacingAndGlyphs" >杨88线总柜(1#电源进线)_A5_59</text>
<line x1="444" y1="306.3" x2="466" y2="306.3" stroke="#f5c77e" stroke-width="1.3" />
<ellipse cx="455" cy="306.3" rx="5.3" ry="3.6" fill="#fff" stroke="#f5c77e" stroke-width="1.1"/>
<text x="471.5" y="306.3" font-size="6.93" fill="#666" text-anchor="start" dominant-baseline="central" font-family="Liberation Sans" textLength="34" lengthAdjust="spacingAndGlyphs" >杨84线</text>
<line x1="515.5" y1="306.3" x2="537.5" y2="306.3" stroke="#7e2a4a" stroke-width="1.3" />
<ellipse cx="526.5" cy="306.3" rx="5.3" ry="3.6" fill="#fff" stroke="#7e2a4a" stroke-width="1.1"/>
<text x="543.0" y="306.3" font-size="6.93" fill="#666" text-anchor="start" dominant-baseline="central" font-family="Liberation Sans" textLength="34" lengthAdjust="spacingAndGlyphs" >杨86线</text>
<rect x="161.5" y="474" width="579.5" height="7.8" fill="#fff" rx="2" stroke="#dcdfe4" stroke-width="1" />
<path d="M453,481 Q520,478 560,475.5 Q640,474.5 700,476 Q730,479 741,481 Z" fill="#eef0f3" />
<rect x="161.5" y="474" width="292" height="7.8" fill="#d9dfe9" rx="3" />
<rect x="162" y="480.5" width="291" height="1.3" fill="#c4ccd8" />
<rect x="161" y="474.5" width="3" height="7" fill="#b0bccc" rx="1.5" />
<rect x="451" y="474.5" width="3" height="7" fill="#b0bccc" rx="1.5" />
<path d="M940.4,382.3 L940.40,316.10 A104.2,66.2 0 1 1 862.76,426.45 Z" fill="#22a02e" />
<path d="M940.4,382.3 L862.76,426.45 A104.2,66.2 0 0 1 836.25,380.18 Z" fill="#0b9de6" />
<path d="M940.4,382.3 L836.25,380.18 A104.2,66.2 0 0 1 896.45,322.28 Z" fill="#f05b3d" />
<path d="M940.4,382.3 L896.45,322.28 A104.2,66.2 0 0 1 929.75,316.45 Z" fill="#17b4b6" />
<path d="M940.4,382.3 L929.75,316.45 A104.2,66.2 0 0 1 940.40,316.10 Z" fill="#7a0d2c" />
<clipPath id="pc"><rect x="773" y="255" width="700" height="240"/></clipPath><g clip-path="url(#pc)">
<path d="M936,316 L935,303.5 L919,303.5" fill="none" stroke="#7a0d2c" stroke-width="1" />
<text x="916.5" y="303.5" font-size="7.32" fill="#7a0d2c" text-anchor="end" dominant-baseline="central" font-family="Liberation Sans" textLength="42" lengthAdjust="spacingAndGlyphs" >杨88线...</text>
<path d="M930,316.5 L900,311 L874,310" fill="none" stroke="#f0ad4e" stroke-width="1" />
<text x="871.5" y="310" font-size="7.32" fill="#f0ad4e" text-anchor="end" dominant-baseline="central" font-family="Liberation Sans" textLength="43" lengthAdjust="spacingAndGlyphs" >杨87线...</text>
<path d="M926,318 L904,317.5 L859,317.5" fill="none" stroke="#17b4b6" stroke-width="1" />
<text x="856.5" y="317.5" font-size="7.32" fill="#17b4b6" text-anchor="end" dominant-baseline="central" font-family="Liberation Sans" textLength="35.5" lengthAdjust="spacingAndGlyphs" >杨86线</text>
<path d="M853,346 L845,343.5 L826,343.5" fill="none" stroke="#f05b3d" stroke-width="1" />
<text x="823.5" y="343.5" font-size="7.32" fill="#f05b3d" text-anchor="end" dominant-baseline="central" font-family="Liberation Sans" textLength="34" lengthAdjust="spacingAndGlyphs" >杨84线</text>
<path d="M843,405 L831,408 L818,408" fill="none" stroke="#0b9de6" stroke-width="1" />
<text x="815.5" y="408" font-size="7.32" fill="#0b9de6" text-anchor="end" dominant-baseline="central" font-family="Liberation Sans" textLength="75" lengthAdjust="spacingAndGlyphs" >杨79线总柜_61</text>
<path d="M1037,410 L1045,412.5 L1060,412.5" fill="none" stroke="#22a02e" stroke-width="1" />
<text x="1062.5" y="412.5" font-size="7.32" fill="#22a02e" text-anchor="start" dominant-baseline="central" font-family="Liberation Sans" textLength="43" lengthAdjust="spacingAndGlyphs" >杨36线...</text>
<path d="M862,427 L852,428.5 L834,428.5" fill="none" stroke="#f0ad4e" stroke-width="1" />
<text x="831.5" y="428.5" font-size="7.32" fill="#f0ad4e" text-anchor="end" dominant-baseline="central" font-family="Liberation Sans" textLength="43.5" lengthAdjust="spacingAndGlyphs" >杨37线...</text>
<path d="M862.5,427.5 L857,436 L842,436" fill="none" stroke="#b07ad0" stroke-width="1" />
<text x="839.5" y="436" font-size="7.32" fill="#b07ad0" text-anchor="end" dominant-baseline="central" font-family="Liberation Sans" textLength="42.5" lengthAdjust="spacingAndGlyphs" >杨70进...</text>
</g>
<rect x="1148.5" y="261.0" width="137" height="19" fill="#fdfdfd" rx="3" stroke="#dedede" stroke-width="1" />
<rect x="1163.5" y="266.5" width="12" height="7.5" fill="#d5dae2" />
<rect x="1163.5" y="266.5" width="12" height="1.6" fill="#b9c1cc" />
<line x1="1163.5" y1="270.5" x2="1175.5" y2="270.5" stroke="#f0f2f5" stroke-width="0.6" />
<line x1="1163.5" y1="272.3" x2="1175.5" y2="272.3" stroke="#f0f2f5" stroke-width="0.6" />
<text x="1217" y="269.7" font-size="8.86" fill="#222" text-anchor="middle" dominant-baseline="central" font-family="Liberation Sans" textLength="11" lengthAdjust="spacingAndGlyphs" >日</text>
<path d="M1260.5,268.0 L1265.8,271.8 L1271,268.0" fill="none" stroke="#aab6c6" stroke-width="1" />
<line x1="1292" y1="269.5" x2="1302" y2="269.5" stroke="#c8c8c8" stroke-width="1.2" />
<rect x="1307.5" y="261.0" width="137" height="19" fill="#fdfdfd" rx="3" stroke="#dedede" stroke-width="1" />
<text x="1375" y="269.7" font-size="8.86" fill="#222" text-anchor="middle" dominant-baseline="central" font-family="Liberation Sans" textLength="11" lengthAdjust="spacingAndGlyphs" >电</text>
<path d="M1419.5,268.0 L1424.8,271.8 L1430,268.0" fill="none" stroke="#aab6c6" stroke-width="1" />
<text x="1244.5" y="306.6" font-size="7.32" fill="#777" text-anchor="end" dominant-baseline="central" font-family="Liberation Sans" textLength="115" lengthAdjust="spacingAndGlyphs" >杨88线总柜(1#电源进...</text>
<text x="1414.5" y="306.6" font-size="7.32" fill="#777" text-anchor="end" dominant-baseline="central" font-family="Liberation Sans" textLength="30" lengthAdjust="spacingAndGlyphs" >1.63%</text>
<rect x="1141.5" y="313.20000000000005" width="269" height="5.7" fill="#e3e3e3" />
<rect x="1141.5" y="313.20000000000005" width="5" height="5.7" fill="#7a0d2c" />
<text x="1244.5" y="337.20000000000005" font-size="7.32" fill="#777" text-anchor="end" dominant-baseline="central" font-family="Liberation Sans" textLength="90" lengthAdjust="spacingAndGlyphs" >杨87线(6kV)_G1...</text>
<text x="1414.5" y="337.20000000000005" font-size="7.32" fill="#777" text-anchor="end" dominant-baseline="central" font-family="Liberation Sans" textLength="30" lengthAdjust="spacingAndGlyphs" >0.00%</text>
<rect x="1141.5" y="343.80000000000007" width="269" height="5.7" fill="#e3e3e3" />
<text x="1244.5" y="367.8" font-size="7.32" fill="#777" text-anchor="end" dominant-baseline="central" font-family="Liberation Sans" textLength="34" lengthAdjust="spacingAndGlyphs" >杨86线</text>
<text x="1414.5" y="367.8" font-size="7.32" fill="#777" text-anchor="end" dominant-baseline="central" font-family="Liberation Sans" textLength="30" lengthAdjust="spacingAndGlyphs" >5.30%</text>
<rect x="1141.5" y="374.40000000000003" width="269" height="5.7" fill="#e3e3e3" />
<rect x="1141.5" y="374.40000000000003" width="14" height="5.7" fill="#17b4b6" />
<text x="1244.5" y="398.40000000000003" font-size="7.32" fill="#777" text-anchor="end" dominant-baseline="central" font-family="Liberation Sans" textLength="34" lengthAdjust="spacingAndGlyphs" >杨84线</text>
<text x="1414.5" y="398.40000000000003" font-size="7.32" fill="#777" text-anchor="end" dominant-baseline="central" font-family="Liberation Sans" textLength="36" lengthAdjust="spacingAndGlyphs" >17.56%</text>
<rect x="1141.5" y="405.00000000000006" width="269" height="5.7" fill="#e3e3e3" />
<rect x="1141.5" y="405.00000000000006" width="47" height="5.7" fill="#f05b3d" />
<text x="1244.5" y="429.0" font-size="7.32" fill="#777" text-anchor="end" dominant-baseline="central" font-family="Liberation Sans" textLength="79" lengthAdjust="spacingAndGlyphs" >杨79线总柜_61</text>
<text x="1414.5" y="429.0" font-size="7.32" fill="#777" text-anchor="end" dominant-baseline="central" font-family="Liberation Sans" textLength="36" lengthAdjust="spacingAndGlyphs" >12.13%</text>
<rect x="1141.5" y="435.6" width="269" height="5.7" fill="#e3e3e3" />
<rect x="1141.5" y="435.6" width="33" height="5.7" fill="#0b9de6" />
<text x="1244.5" y="459.6" font-size="7.32" fill="#777" text-anchor="end" dominant-baseline="central" font-family="Liberation Sans" textLength="101" lengthAdjust="spacingAndGlyphs" >杨70进线6kV(备)_...</text>
<text x="1414.5" y="459.6" font-size="7.32" fill="#777" text-anchor="end" dominant-baseline="central" font-family="Liberation Sans" textLength="30" lengthAdjust="spacingAndGlyphs" >0.00%</text>
<rect x="1141.5" y="466.20000000000005" width="269" height="5.7" fill="#e3e3e3" />
<rect x="1425" y="301" width="13" height="184" fill="#fff" stroke="#e2e6ec" stroke-width="1" />
<rect x="1425.5" y="301" width="12" height="120" fill="#dde4ee" />
<path d="M1426,421 L1437,485 L1426,485 Z" fill="#f2f4f6" />
<line x1="166.9" y1="619.9" x2="727.3000000000001" y2="619.9" stroke="#e6e6e6" stroke-width="1" />
<line x1="166.9" y1="592.0" x2="727.3000000000001" y2="592.0" stroke="#e6e6e6" stroke-width="1" />
<line x1="166.9" y1="564.0999999999999" x2="727.3000000000001" y2="564.0999999999999" stroke="#e6e6e6" stroke-width="1" />
<line x1="166.9" y1="536.1999999999999" x2="727.3000000000001" y2="536.1999999999999" stroke="#e6e6e6" stroke-width="1" />
<path d="M166.90,623.69 C190.25,624.45 190.25,624.48 213.60,625.20 C236.95,625.93 237.16,624.02 260.30,626.60 C283.86,629.22 285.10,638.31 307.00,635.61 C331.80,630.88 329.82,610.13 353.70,608.80 C376.52,608.80 375.93,625.30 400.40,630.39 C422.63,635.01 423.74,628.54 447.10,628.21 C470.44,627.89 470.45,628.65 493.80,629.08 C517.15,629.51 517.15,629.43 540.50,629.94 C563.85,630.45 563.98,629.04 587.20,631.12 C610.68,633.22 610.44,637.23 633.90,638.31 C657.14,638.31 657.23,635.92 680.60,635.41 C703.93,634.91 703.95,635.86 727.30,636.31 L727.3000000000001,647.8 L166.9,647.8 Z" fill="#dcf3d8" />
<path d="M166.90,630.39 C190.25,610.50 188.58,594.46 213.60,590.61 C235.28,590.61 236.14,605.10 260.30,615.99 C282.84,626.16 282.95,628.79 307.00,632.71 C329.65,632.71 330.42,632.71 353.70,631.20 C377.12,629.52 377.26,629.85 400.40,626.01 C423.96,622.10 423.53,617.13 447.10,615.71 C470.23,614.33 470.41,618.50 493.80,620.40 C517.11,622.30 517.14,622.08 540.50,623.30 C563.84,624.53 563.84,624.74 587.20,625.31 C610.54,625.88 610.55,625.72 633.90,625.59 C657.25,625.47 657.30,626.10 680.60,624.81 C704.00,623.51 703.95,622.61 727.30,620.40 L727.3000000000001,647.8 L166.9,647.8 Z" fill="#c4d4f3" />
<path d="M166.90,623.69 C190.25,624.45 190.25,624.48 213.60,625.20 C236.95,625.93 237.16,624.02 260.30,626.60 C283.86,629.22 285.10,638.31 307.00,635.61 C331.80,630.88 329.82,610.13 353.70,608.80 C376.52,608.80 375.93,625.30 400.40,630.39 C422.63,635.01 423.74,628.54 447.10,628.21 C470.44,627.89 470.45,628.65 493.80,629.08 C517.15,629.51 517.15,629.43 540.50,629.94 C563.85,630.45 563.98,629.04 587.20,631.12 C610.68,633.22 610.44,637.23 633.90,638.31 C657.14,638.31 657.23,635.92 680.60,635.41 C703.93,634.91 703.95,635.86 727.30,636.31" fill="none" stroke="#62c46a" stroke-width="1.5" />
<path d="M166.90,630.39 C190.25,610.50 188.58,594.46 213.60,590.61 C235.28,590.61 236.14,605.10 260.30,615.99 C282.84,626.16 282.95,628.79 307.00,632.71 C329.65,632.71 330.42,632.71 353.70,631.20 C377.12,629.52 377.26,629.85 400.40,626.01 C423.96,622.10 423.53,617.13 447.10,615.71 C470.23,614.33 470.41,618.50 493.80,620.40 C517.11,622.30 517.14,622.08 540.50,623.30 C563.84,624.53 563.84,624.74 587.20,625.31 C610.54,625.88 610.55,625.72 633.90,625.59 C657.25,625.47 657.30,626.10 680.60,624.81 C704.00,623.51 703.95,622.61 727.30,620.40" fill="none" stroke="#3c95cc" stroke-width="1.6" />
<line x1="166.9" y1="536" x2="166.9" y2="647.8" stroke="#333" stroke-width="1" />
<line x1="162.4" y1="647.8" x2="166.9" y2="647.8" stroke="#333" stroke-width="1" />
<text x="159.5" y="647.8" font-size="7.7" fill="#666" text-anchor="end" dominant-baseline="central" font-family="Liberation Sans" textLength="6.2" lengthAdjust="spacingAndGlyphs" >0</text>
<line x1="162.4" y1="619.9" x2="166.9" y2="619.9" stroke="#333" stroke-width="1" />
<text x="159.5" y="619.9" font-size="7.7" fill="#666" text-anchor="end" dominant-baseline="central" font-family="Liberation Sans" textLength="28.5" lengthAdjust="spacingAndGlyphs" >1,000</text>
<line x1="162.4" y1="592.0" x2="166.9" y2="592.0" stroke="#333" stroke-width="1" />
<text x="159.5" y="592.0" font-size="7.7" fill="#666" text-anchor="end" dominant-baseline="central" font-family="Liberation Sans" textLength="28.5" lengthAdjust="spacingAndGlyphs" >2,000</text>
<line x1="162.4" y1="564.0999999999999" x2="166.9" y2="564.0999999999999" stroke="#333" stroke-width="1" />
<text x="159.5" y="564.0999999999999" font-size="7.7" fill="#666" text-anchor="end" dominant-baseline="central" font-family="Liberation Sans" textLength="28.5" lengthAdjust="spacingAndGlyphs" >3,000</text>
<line x1="162.4" y1="536.1999999999999" x2="166.9" y2="536.1999999999999" stroke="#333" stroke-width="1" />
<text x="159.5" y="536.1999999999999" font-size="7.7" fill="#666" text-anchor="end" dominant-baseline="central" font-family="Liberation Sans" textLength="28.5" lengthAdjust="spacingAndGlyphs" >4,000</text>
<line x1="166.9" y1="647.8" x2="727.3000000000001" y2="647.8" stroke="#333" stroke-width="1" />
<line x1="166.9" y1="647.8" x2="166.9" y2="651.8" stroke="#333" stroke-width="1" />
<text x="166.9" y="655.8" font-size="7.7" fill="#666" text-anchor="middle" dominant-baseline="central" font-family="Liberation Sans" textLength="28.5" lengthAdjust="spacingAndGlyphs" >08:00</text>
<line x1="213.60000000000002" y1="647.8" x2="213.60000000000002" y2="651.8" stroke="#333" stroke-width="1" />
<text x="213.60000000000002" y="655.8" font-size="7.7" fill="#666" text-anchor="middle" dominant-baseline="central" font-family="Liberation Sans" textLength="28.5" lengthAdjust="spacingAndGlyphs" >09:00</text>
<line x1="260.3" y1="647.8" x2="260.3" y2="651.8" stroke="#333" stroke-width="1" />
<text x="260.3" y="655.8" font-size="7.7" fill="#666" text-anchor="middle" dominant-baseline="central" font-family="Liberation Sans" textLength="28.5" lengthAdjust="spacingAndGlyphs" >10:00</text>
<line x1="307.0" y1="647.8" x2="307.0" y2="651.8" stroke="#333" stroke-width="1" />
<text x="307.0" y="655.8" font-size="7.7" fill="#666" text-anchor="middle" dominant-baseline="central" font-family="Liberation Sans" textLength="28.5" lengthAdjust="spacingAndGlyphs" >11:00</text>
<line x1="353.70000000000005" y1="647.8" x2="353.70000000000005" y2="651.8" stroke="#333" stroke-width="1" />
<text x="353.70000000000005" y="655.8" font-size="7.7" fill="#666" text-anchor="middle" dominant-baseline="central" font-family="Liberation Sans" textLength="28.5" lengthAdjust="spacingAndGlyphs" >12:00</text>
<line x1="400.4" y1="647.8" x2="400.4" y2="651.8" stroke="#333" stroke-width="1" />
<text x="400.4" y="655.8" font-size="7.7" fill="#666" text-anchor="middle" dominant-baseline="central" font-family="Liberation Sans" textLength="28.5" lengthAdjust="spacingAndGlyphs" >13:00</text>
<line x1="447.1" y1="647.8" x2="447.1" y2="651.8" stroke="#333" stroke-width="1" />
<text x="447.1" y="655.8" font-size="7.7" fill="#666" text-anchor="middle" dominant-baseline="central" font-family="Liberation Sans" textLength="28.5" lengthAdjust="spacingAndGlyphs" >14:00</text>
<line x1="493.80000000000007" y1="647.8" x2="493.80000000000007" y2="651.8" stroke="#333" stroke-width="1" />
<text x="493.80000000000007" y="655.8" font-size="7.7" fill="#666" text-anchor="middle" dominant-baseline="central" font-family="Liberation Sans" textLength="28.5" lengthAdjust="spacingAndGlyphs" >15:00</text>
<line x1="540.5" y1="647.8" x2="540.5" y2="651.8" stroke="#333" stroke-width="1" />
<text x="540.5" y="655.8" font-size="7.7" fill="#666" text-anchor="middle" dominant-baseline="central" font-family="Liberation Sans" textLength="28.5" lengthAdjust="spacingAndGlyphs" >16:00</text>
<line x1="587.2" y1="647.8" x2="587.2" y2="651.8" stroke="#333" stroke-width="1" />
<text x="587.2" y="655.8" font-size="7.7" fill="#666" text-anchor="middle" dominant-baseline="central" font-family="Liberation Sans" textLength="28.5" lengthAdjust="spacingAndGlyphs" >17:00</text>
<line x1="633.9" y1="647.8" x2="633.9" y2="651.8" stroke="#333" stroke-width="1" />
<text x="633.9" y="655.8" font-size="7.7" fill="#666" text-anchor="middle" dominant-baseline="central" font-family="Liberation Sans" textLength="28.5" lengthAdjust="spacingAndGlyphs" >18:00</text>
<line x1="680.6" y1="647.8" x2="680.6" y2="651.8" stroke="#333" stroke-width="1" />
<text x="680.6" y="655.8" font-size="7.7" fill="#666" text-anchor="middle" dominant-baseline="central" font-family="Liberation Sans" textLength="28.5" lengthAdjust="spacingAndGlyphs" >19:00</text>
<line x1="727.3000000000001" y1="647.8" x2="727.3000000000001" y2="651.8" stroke="#333" stroke-width="1" />
<text x="727.3000000000001" y="655.8" font-size="7.7" fill="#666" text-anchor="middle" dominant-baseline="central" font-family="Liberation Sans" textLength="28.5" lengthAdjust="spacingAndGlyphs" >20:00</text>
<line x1="376" y1="676.7" x2="398" y2="676.7" stroke="#62c46a" stroke-width="1.3" />
<ellipse cx="387" cy="676.7" rx="5" ry="4" fill="#62c46a"/>
<text x="402.5" y="676.7" font-size="7.32" fill="#555" text-anchor="start" dominant-baseline="central" font-family="Liberation Sans" textLength="21.5" lengthAdjust="spacingAndGlyphs" >本期</text>
<line x1="434" y1="676.7" x2="456" y2="676.7" stroke="#3c95cc" stroke-width="1.3" />
<ellipse cx="445" cy="676.7" rx="5" ry="4" fill="#3c95cc"/>
<text x="462.5" y="676.7" font-size="7.32" fill="#555" text-anchor="start" dominant-baseline="central" font-family="Liberation Sans" textLength="21" lengthAdjust="spacingAndGlyphs" >上期</text>
<rect x="166.5" y="682.3" width="562" height="8" fill="#fff" rx="1" stroke="#dfe2e6" stroke-width="1" />
<path d="M450,690 L520,690 L540,686.5 Q580,685.8 640,685.5 L670,685 L700,685.5 L728.5,689 L728.5,690 Z" fill="#e2e5e8" />
<rect x="166.5" y="682.3" width="284" height="8" fill="#c5cedb" />
<circle cx="170.5" cy="686.3" r="4" fill="#fff" stroke="#aab4c2" stroke-width="1"/>
<circle cx="450" cy="686.3" r="4" fill="#fff" stroke="#aab4c2" stroke-width="1"/>
<rect x="465.5" y="504.8" width="137" height="19" fill="#fdfdfd" rx="3" stroke="#dedede" stroke-width="1" />
<rect x="480.5" y="510.29999999999995" width="12" height="7.5" fill="#d5dae2" />
<rect x="480.5" y="510.29999999999995" width="12" height="1.6" fill="#b9c1cc" />
<line x1="480.5" y1="514.3" x2="492.5" y2="514.3" stroke="#f0f2f5" stroke-width="0.6" />
<line x1="480.5" y1="516.0999999999999" x2="492.5" y2="516.0999999999999" stroke="#f0f2f5" stroke-width="0.6" />
<text x="533" y="513.5" font-size="8.86" fill="#222" text-anchor="middle" dominant-baseline="central" font-family="Liberation Sans" textLength="11" lengthAdjust="spacingAndGlyphs" >日</text>
<path d="M577.5,511.79999999999995 L582.8,515.5999999999999 L588,511.79999999999995" fill="none" stroke="#aab6c6" stroke-width="1" />
<line x1="608" y1="512.5" x2="618" y2="512.5" stroke="#c8c8c8" stroke-width="1.2" />
<rect x="622.9" y="504.8" width="137" height="19" fill="#fdfdfd" rx="3" stroke="#dedede" stroke-width="1" />
<text x="691" y="513.5" font-size="8.86" fill="#222" text-anchor="middle" dominant-baseline="central" font-family="Liberation Sans" textLength="11" lengthAdjust="spacingAndGlyphs" >电</text>
<path d="M734.9,511.79999999999995 L740.1999999999999,515.5999999999999 L745.4,511.79999999999995" fill="none" stroke="#aab6c6" stroke-width="1" />
<text x="888" y="543.5" font-size="7.7" fill="#b8b8b8" text-anchor="middle" dominant-baseline="central" font-family="Liberation Sans" textLength="44" lengthAdjust="spacingAndGlyphs" >对象名称</text>
<text x="1042" y="543.5" font-size="7.7" fill="#b8b8b8" text-anchor="middle" dominant-baseline="central" font-family="Liberation Sans" textLength="44" lengthAdjust="spacingAndGlyphs" >发生时间</text>
<text x="1196" y="543.5" font-size="7.7" fill="#b8b8b8" text-anchor="middle" dominant-baseline="central" font-family="Liberation Sans" textLength="44" lengthAdjust="spacingAndGlyphs" >报警描述</text>
<text x="1351" y="543.5" font-size="7.7" fill="#b8b8b8" text-anchor="middle" dominant-baseline="central" font-family="Liberation Sans" textLength="44" lengthAdjust="spacingAndGlyphs" >报警条件</text>
<rect x="784.5" y="556.1" width="662.5" height="23.4" fill="#fff" rx="4" stroke="#ebebeb" stroke-width="1" />
<rect x="788" y="561.3000000000001" width="21.5" height="13.6" fill="#e8737c" rx="1" />
<path d="M795.25,570.3000000000001 Q795.55,564.1 798.75,564.1 Q801.95,564.1 802.25,570.3000000000001 Z" fill="none" stroke="#fff" stroke-width="1" />
<line x1="797.75" y1="571.4" x2="799.75" y2="571.4" stroke="#fff" stroke-width="1" />
<text x="888" y="567.4" font-size="7.7" fill="#444" text-anchor="middle" dominant-baseline="central" font-family="Liberation Sans" textLength="94" lengthAdjust="spacingAndGlyphs" >1#连铸机_PB11_93</text>
<text x="1042" y="567.4" font-size="7.7" fill="#444" text-anchor="middle" dominant-baseline="central" font-family="Liberation Sans" textLength="102" lengthAdjust="spacingAndGlyphs" >2022-12-03 20:41:46</text>
<text x="1196" y="567.4" font-size="7.7" fill="#444" text-anchor="middle" dominant-baseline="central" font-family="Liberation Sans" textLength="142" lengthAdjust="spacingAndGlyphs" >【1#连铸机_PB11_93】A相...</text>
<text x="1351" y="567.4" font-size="7.7" fill="#444" text-anchor="middle" dominant-baseline="central" font-family="Liberation Sans" textLength="128" lengthAdjust="spacingAndGlyphs" >{1#连铸机_PB11_93.Ia}&lt;1</text>
<rect x="784.5" y="583.7" width="662.5" height="23.4" fill="#fff" rx="4" stroke="#ebebeb" stroke-width="1" />
<rect x="788" y="588.9000000000001" width="21.5" height="13.6" fill="#e8737c" rx="1" />
<path d="M795.25,597.9000000000001 Q795.55,591.7 798.75,591.7 Q801.95,591.7 802.25,597.9000000000001 Z" fill="none" stroke="#fff" stroke-width="1" />
<line x1="797.75" y1="599.0" x2="799.75" y2="599.0" stroke="#fff" stroke-width="1" />
<text x="888" y="595.0" font-size="7.7" fill="#444" text-anchor="middle" dominant-baseline="central" font-family="Liberation Sans" textLength="94" lengthAdjust="spacingAndGlyphs" >炼钢电弧炉_N5_49</text>
<text x="1042" y="595.0" font-size="7.7" fill="#444" text-anchor="middle" dominant-baseline="central" font-family="Liberation Sans" textLength="102" lengthAdjust="spacingAndGlyphs" >2022-12-03 20:41:46</text>
<text x="1196" y="595.0" font-size="7.7" fill="#444" text-anchor="middle" dominant-baseline="central" font-family="Liberation Sans" textLength="142" lengthAdjust="spacingAndGlyphs" >【炼钢电弧炉_N5_49】A相...</text>
<text x="1351" y="595.0" font-size="7.7" fill="#444" text-anchor="middle" dominant-baseline="central" font-family="Liberation Sans" textLength="134" lengthAdjust="spacingAndGlyphs" >{炼钢电弧炉_N5_49.Ia}&lt;20</text>
<rect x="784.5" y="611.3000000000001" width="662.5" height="23.4" fill="#fff" rx="4" stroke="#ebebeb" stroke-width="1" />
<rect x="788" y="616.5000000000001" width="21.5" height="13.6" fill="#e8737c" rx="1" />
<path d="M795.25,625.5000000000001 Q795.55,619.3000000000001 798.75,619.3000000000001 Q801.95,619.3000000000001 802.25,625.5000000000001 Z" fill="none" stroke="#fff" stroke-width="1" />
<line x1="797.75" y1="626.6" x2="799.75" y2="626.6" stroke="#fff" stroke-width="1" />
<text x="888" y="622.6" font-size="7.7" fill="#444" text-anchor="middle" dominant-baseline="central" font-family="Liberation Sans" textLength="94" lengthAdjust="spacingAndGlyphs" >铸钢精炼炉_N8_52</text>
<text x="1042" y="622.6" font-size="7.7" fill="#444" text-anchor="middle" dominant-baseline="central" font-family="Liberation Sans" textLength="102" lengthAdjust="spacingAndGlyphs" >2022-12-03 20:41:46</text>
<text x="1196" y="622.6" font-size="7.7" fill="#444" text-anchor="middle" dominant-baseline="central" font-family="Liberation Sans" textLength="142" lengthAdjust="spacingAndGlyphs" >【锻造电弧炉(MVA)_N8_52...</text>
<text x="1351" y="622.6" font-size="7.7" fill="#444" text-anchor="middle" dominant-baseline="central" font-family="Liberation Sans" textLength="132" lengthAdjust="spacingAndGlyphs" >{铸钢精炼炉_N8_52.Ia}&lt;10</text>
<rect x="784.5" y="638.9000000000001" width="662.5" height="23.4" fill="#fff" rx="4" stroke="#ebebeb" stroke-width="1" />
<rect x="788" y="644.1000000000001" width="21.5" height="13.6" fill="#e8737c" rx="1" />
<path d="M795.25,653.1000000000001 Q795.55,646.9000000000001 798.75,646.9000000000001 Q801.95,646.9000000000001 802.25,653.1000000000001 Z" fill="none" stroke="#fff" stroke-width="1" />
<line x1="797.75" y1="654.2" x2="799.75" y2="654.2" stroke="#fff" stroke-width="1" />
<text x="884" y="650.2" font-size="7.7" fill="#444" text-anchor="middle" dominant-baseline="central" font-family="Liberation Sans" textLength="144" lengthAdjust="spacingAndGlyphs" >杨37线总柜(1#主变进线)_N...</text>
<text x="1042" y="650.2" font-size="7.7" fill="#444" text-anchor="middle" dominant-baseline="central" font-family="Liberation Sans" textLength="102" lengthAdjust="spacingAndGlyphs" >2022-12-03 20:41:46</text>
<text x="1196" y="650.2" font-size="7.7" fill="#444" text-anchor="middle" dominant-baseline="central" font-family="Liberation Sans" textLength="142" lengthAdjust="spacingAndGlyphs" >杨37线总柜(1#主变进线)_N...</text>
<text x="1351" y="650.2" font-size="7.7" fill="#444" text-anchor="middle" dominant-baseline="central" font-family="Liberation Sans" textLength="144" lengthAdjust="spacingAndGlyphs" >{杨37线总柜(1#主变进线)_N...</text>
<rect x="784.5" y="666.5" width="662.5" height="23.4" fill="#fff" rx="4" stroke="#ebebeb" stroke-width="1" />
<rect x="788" y="671.7" width="21.5" height="13.6" fill="#e8737c" rx="1" />
<path d="M795.25,680.7 Q795.55,674.5 798.75,674.5 Q801.95,674.5 802.25,680.7 Z" fill="none" stroke="#fff" stroke-width="1" />
<line x1="797.75" y1="681.8" x2="799.75" y2="681.8" stroke="#fff" stroke-width="1" />
<text x="888" y="677.8" font-size="7.7" fill="#444" text-anchor="middle" dominant-baseline="central" font-family="Liberation Sans" textLength="77" lengthAdjust="spacingAndGlyphs" >1#整流变_3AH_2</text>
<text x="1042" y="677.8" font-size="7.7" fill="#444" text-anchor="middle" dominant-baseline="central" font-family="Liberation Sans" textLength="102" lengthAdjust="spacingAndGlyphs" >2022-12-03 20:41:46</text>
<text x="1196" y="677.8" font-size="7.7" fill="#444" text-anchor="middle" dominant-baseline="central" font-family="Liberation Sans" textLength="142" lengthAdjust="spacingAndGlyphs" >【1#整流变_3AH_2】A相电...</text>
<text x="1351" y="677.8" font-size="7.7" fill="#444" text-anchor="middle" dominant-baseline="central" font-family="Liberation Sans" textLength="130" lengthAdjust="spacingAndGlyphs" >{1#整流变_3AH_2.Ia}&lt;20</text>
<path d="M1471,581 L1460,581 Q1448,581 1448,592.5 Q1448,604 1460,604 L1471,604 Z" fill="#4a8ff0" />
<path d="M1463.5,588 L1458.5,592.5 L1463.5,597" fill="none" stroke="#fff" stroke-width="2" />
<rect x="1405.5" y="675" width="65.5" height="44" fill="#1f2023" />
<rect x="1456" y="675" width="15" height="44" fill="#3e3f42" />
<rect x="1415" y="688" width="33" height="19" fill="#3b3c3f" rx="7" />
<path d="M1424,692 L1440,700 L1440,692 L1424,700 Z" fill="#1f2023" />
<circle cx="1463.5" cy="692" r="1.1" fill="#e08a3a"/>
<circle cx="1463.5" cy="697" r="1.1" fill="#e08a3a"/>
<circle cx="1463.5" cy="702" r="1.1" fill="#e08a3a"/>
<rect x="1463" y="372" width="10" height="48" fill="#3a3b3e" rx="3" stroke="#222" stroke-width="1" />
<rect x="1465" y="400" width="6" height="2.2" fill="#48b050" />
<rect x="1465" y="404" width="6" height="2.2" fill="#48b050" />
<rect x="1465" y="408" width="6" height="2.2" fill="#48b050" />
<rect x="1465" y="412" width="6" height="2.2" fill="#48b050" /></svg></body></html>
